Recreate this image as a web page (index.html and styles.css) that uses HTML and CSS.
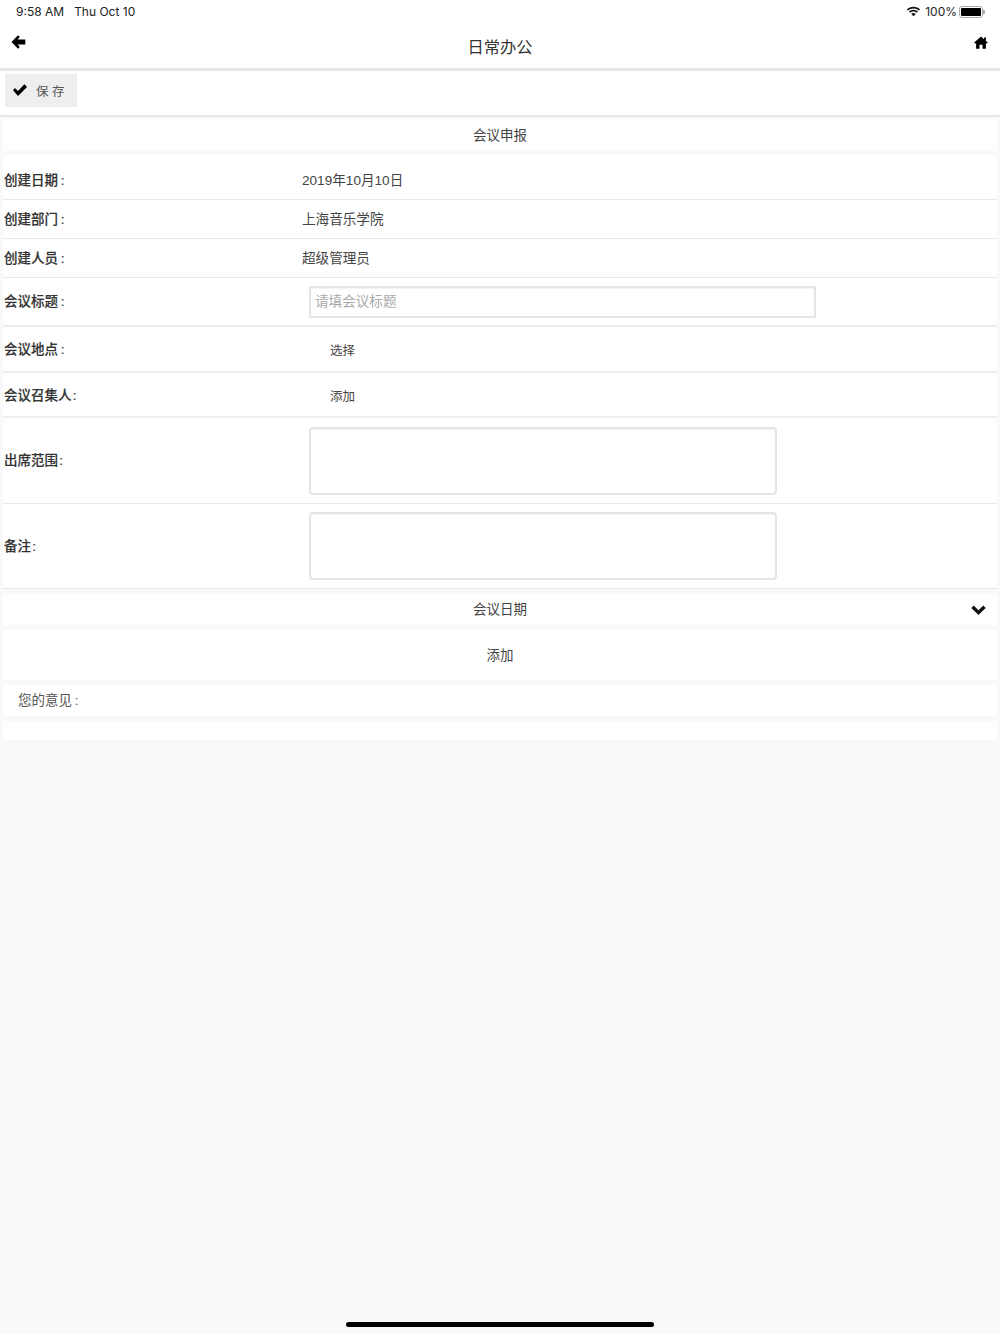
FILE: index.html
```html
<!DOCTYPE html>
<html lang="zh-CN">
<head>
<meta charset="utf-8">
<title>日常办公</title>
<link rel="stylesheet" href="styles.css">
</head>
<body>
<div class="page">
  <div class="status">
    <div class="status-left"><span>9:58 AM</span><span>Thu Oct 10</span></div>
    <div class="status-right">
      <svg class="wifi" width="15" height="11" viewBox="0 0 15 11"><path d="M7.5 2.4c2.2 0 4.100.8 5.500 2.200l1.100-1.200C12.400 1.700 10.100.7 7.500.7S2.600 1.700.9 3.400l1.100 1.200C3.400 3.200 5.300 2.400 7.500 2.400z"/><path d="M7.500 5.400c1.300 0 2.500.5 3.400 1.300l1.100-1.200C10.800 4.400 9.200 3.700 7.500 3.700S4.200 4.400 3 5.500l1.100 1.200c.9-.8 2.100-1.300 3.400-1.300z"/><path d="M7.500 10.300 9.800 7.900C9.200 7.300 8.400 7 7.500 7s-1.700.3-2.300.9z"/></svg>
      <span>100%</span>
      <span class="battery"><span class="battery-fill"></span></span>
    </div>
  </div>
  <header class="nav">
    <svg class="nav-back" width="15" height="14" viewBox="0 0 15 14"><path d="M7 0.300 8.800 2.100 6.600 4.600H14.300V9.400H6.600L8.800 11.900 7 13.700 0.500 7z"/></svg>
    <h1 class="nav-title">日常办公</h1>
    <svg class="nav-home" width="14" height="13" viewBox="0 0 14 13"><path d="M7 0.500 10 3.200V1.400H11.900V4.900L13.800 6.600 13 7.500H11.900V12.800H8.500V8.700H5.500V12.800H2.100V7.500H1L0.200 6.600z"/></svg>
  </header>
  <div class="toolbar">
    <button class="save" type="button">
      <svg width="14" height="12" viewBox="0 0 14 12"><path d="M1.900 4.100 5 7 11.400 0.300 14 3 5 11.900 0 6.300z"/></svg>
      <span>保 存</span>
    </button>
  </div>
  <main class="content">
    <div class="panel title-panel">会议申报</div>
    <div class="panel form">
      <div class="row row-info r1"><div class="label">创建日期&#8201;:</div><div class="value">2019年10月10日</div></div>
      <div class="row row-info r2"><div class="label">创建部门&#8201;:</div><div class="value">上海音乐学院</div></div>
      <div class="row row-info r3"><div class="label">创建人员&#8201;:</div><div class="value">超级管理员</div></div>
      <div class="row r4"><div class="label">会议标题&#8201;:</div><div class="field"><div class="input">请填会议标题</div></div></div>
      <div class="row r5"><div class="label">会议地点&#8201;:</div><div class="link">选择</div></div>
      <div class="row r6"><div class="label">会议召集人&#8202;:</div><div class="link">添加</div></div>
      <div class="row r7"><div class="label">出席范围&#8202;:</div><div class="field"><div class="textarea"></div></div></div>
      <div class="row r8"><div class="label">备注&#8202;:</div><div class="field"><div class="textarea"></div></div></div>
    </div>
    <div class="panel title-panel date-panel">会议日期
      <svg class="chevron" width="15" height="10" viewBox="0 0 15 10"><path d="M0.300 2.900 2.700 0.500 7.500 5.300 12.300 0.500 14.700 2.900 7.500 10z"/></svg>
    </div>
    <div class="panel add-panel">添加</div>
    <div class="panel opinion">您的意见&#8201;:</div>
    <div class="panel blank"></div>
  </main>
  <div class="home-bar"></div>
</div>
</body>
</html>
```
FILE: styles.css
```css
* { box-sizing: border-box; }
html, body { margin: 0; padding: 0; }
body {
  background: #f9f9f9;
  color: #333;
  font-family: "Liberation Sans", "Noto Sans CJK SC", sans-serif;
  font-size: 13.5px;
}
.page { position: relative; width: 1000px; height: 1334px; overflow: hidden; }
.status {
  height: 23px;
  background: #fff;
  display: flex;
  justify-content: space-between;
  align-items: center;
  padding: 0 17px 0 16px;
  color: #222;
  font-family: "Inter", "Liberation Sans", sans-serif;
  font-size: 12px;
}
.status-left { display: flex; gap: 10px; }
.status-right { display: flex; align-items: center; gap: 3px; }
.wifi { fill: #111; margin-right: 1px; }
.battery {
  display: block;
  width: 24px;
  height: 12px;
  border: 1px solid #aaa;
  border-radius: 3px;
  padding: 1px;
  margin-left: -1px;
  position: relative;
}
.battery::after {
  content: "";
  position: absolute;
  right: -3px;
  top: 3px;
  width: 2px;
  height: 4px;
  background: #aaa;
  border-radius: 0 1px 1px 0;
}
.battery-fill { display: block; height: 100%; background: #000; border-radius: 1px; }
.nav {
  height: 48px;
  background: #fff;
  border-bottom: 3px solid #e6e6e6;
  display: flex;
  justify-content: space-between;
  align-items: flex-start;
  padding: 12px 12px 0 11px;
  fill: #000;
}
.nav-home { margin-top: 1px; }
.nav-title {
  margin: 0;
  font-size: 16.250px;
  line-height: 24px;
  font-weight: 400;
  color: #333;
}
.toolbar {
  height: 46px;
  background: #fff;
  border-bottom: 2px solid #e9e9e9;
  padding: 3px 5px 0;
}
.save {
  width: 72px;
  height: 33px;
  border: 0;
  border-radius: 0;
  background: #eee;
  color: #555;
  font: inherit;
  font-size: 12.5px;
  display: flex;
  align-items: center;
  padding: 0 0 1px 8px;
  gap: 9px;
  fill: #000;
}
.content { padding: 2px 3px 0; }
.panel { background: #fff; margin-bottom: 4px; }
.title-panel {
  height: 32px;
  display: flex;
  align-items: center;
  justify-content: center;
  padding-bottom: 2px;
  color: #444;
  position: relative;
}
.form { margin-bottom: 5px; }
.row {
  display: flex;
  align-items: center;
  border-bottom: 1px solid #e8e8e8;
  padding-left: 1px;
  padding-bottom: 2px;
}
.label { width: 298px; flex: none; color: #333; font-weight: 500; -webkit-text-stroke: 0.15px #333; }
.value { color: #444; font-size: 13.6px; }
.r1 { height: 45px; padding-bottom: 0; padding-top: 4px; }
.r2, .r3 { height: 39px; }
.r4 { height: 49px; border-bottom: 2px solid #eee; padding-bottom: 0; }
.r5 { height: 46px; border-bottom: 2px solid #eee; }
.r6 { height: 45px; border-bottom: 2px solid #eee; padding-bottom: 0; }
.r7 { height: 86px; padding-bottom: 0; }
.r8 { height: 85px; padding-bottom: 0; }
.r4 .label, .r7 .label { padding-bottom: 4px; }
.r6 .label, .r8 .label { padding-bottom: 2px; }
.r5 .link, .r6 .link { padding-top: 2px; }
.field { padding-left: 7px; }
.input {
  width: 507px;
  height: 32px;
  border: 2px solid #e4e4e4;
  background: #fff;
  color: #aaa;
  padding: 0 4px;
  line-height: 27px;
  font-size: 13.6px;
  box-shadow: inset 0 1px 1px rgba(0, 0, 0, .05);
}
.textarea {
  width: 468px;
  height: 68px;
  border: 2px solid #e4e4e4;
  border-radius: 4px;
  background: #fff;
  box-shadow: inset 0 1px 1px rgba(0, 0, 0, .05);
}
.link { padding-left: 28px; font-size: 12.500px; color: #444; }
.date-panel { height: 31px; margin-bottom: 5px; padding-bottom: 4px; }
.chevron { position: absolute; right: 11px; top: 11px; fill: #111; }
.add-panel {
  height: 50px;
  margin-bottom: 5px;
  display: flex;
  align-items: center;
  justify-content: center;
  padding-bottom: 2px;
  color: #444;
}
.opinion {
  height: 31px;
  margin-bottom: 5px;
  display: flex;
  align-items: center;
  padding-left: 15px;
  padding-bottom: 4px;
  color: #555;
}
.blank { height: 19px; margin: 0; }
.home-bar {
  position: absolute;
  left: 346px;
  bottom: 7px;
  width: 308px;
  height: 5px;
  border-radius: 3px;
  background: #000;
}
```
